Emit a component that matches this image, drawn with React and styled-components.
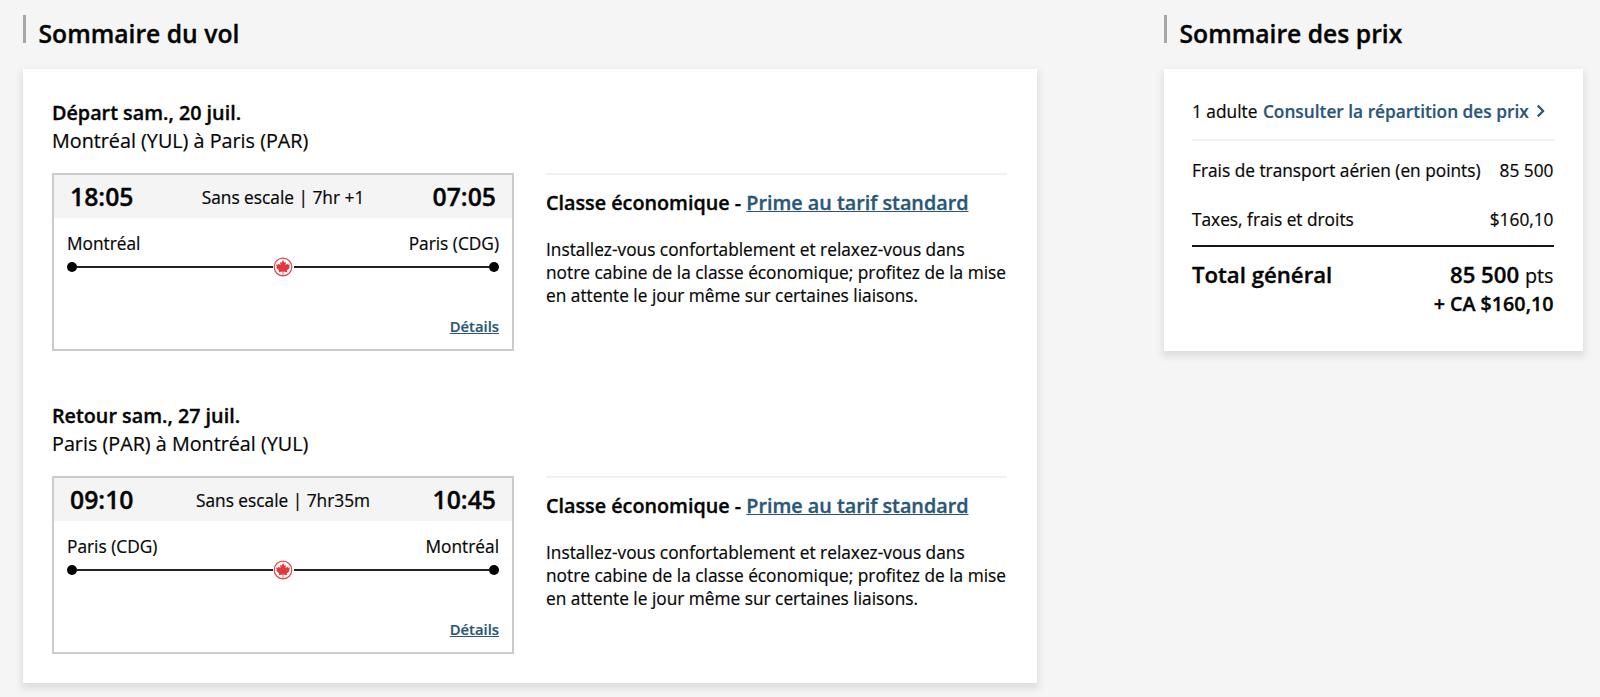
import React from 'react';
import styled, { createGlobalStyle } from 'styled-components';

const GlobalStyle = createGlobalStyle`
  * {
    box-sizing: border-box;
  }
  body {
    margin: 0;
    background-color: #f5f5f5;
    color: #050505;
    font-family: 'Open Sans', 'Noto Sans', sans-serif;
    -webkit-text-stroke: 0.2px;
  }
  h2, h3, p {
    margin: 0;
  }
`;

const Page = styled.div`
  width: 1600px;
  height: 697px;
  padding: 15px 17px 0 23px;
  display: flex;
  justify-content: space-between;
  align-items: flex-start;
  overflow: hidden;
`;
const Column = styled.section`
  width: ${(props) => props.$width}px;
`;
const Heading = styled.div`
  height: 54px;
  display: flex;
  align-items: flex-start;
  gap: 12.5px;
`;
const Bar = styled.span`
  width: 3px;
  height: 28px;
  background-color: #a5a8ab;
`;
const Title = styled.h2`
  padding-top: 2px;
  font-size: 24.7px;
  font-weight: 600;
  line-height: 34px;
  white-space: nowrap;
  -webkit-text-stroke: 0.35px;
`;
const Card = styled.div`
  height: ${(props) => props.$height}px;
  padding: ${(props) => props.$padding};
  background-color: white;
  box-shadow: 0 4px 7px 2px rgba(0, 0, 0, 0.09);
`;

const Flight = styled.article`
  height: 303px;
`;
const Route = styled.h3`
  height: 74px;
  font-size: 19.75px;
  font-weight: 400;
  line-height: 28px;
`;
const Strong = styled.strong`
  display: block;
  font-weight: 600;
  -webkit-text-stroke: 0.35px;
`;
const Row = styled.div`
  display: flex;
  gap: 32px;
`;
const Segment = styled.div`
  width: 462px;
  height: 178px;
  border: 2px solid #cbcbcb;
`;
const Times = styled.div`
  height: 43px;
  padding: 0 16px;
  display: flex;
  align-items: center;
  justify-content: space-between;
  background-color: #f4f4f4;
`;
const Time = styled.span`
  padding-bottom: 2px;
  font-size: 24.8px;
  font-weight: 600;
  line-height: 40px;
  -webkit-text-stroke: 0.35px;
`;
const Duration = styled.span`
  padding-top: 1px;
  font-size: 17.3px;
`;
const Track = styled.div`
  padding: 13px 13px 0;
`;
const Cities = styled.div`
  display: flex;
  justify-content: space-between;
  font-size: 17.3px;
  line-height: 25px;
`;
const Line = styled.div`
  height: 22px;
  display: flex;
  align-items: center;
`;
const Dot = styled.span`
  width: 10px;
  height: 10px;
  border-radius: 50%;
  background-color: #000;
`;
const Rule = styled.span`
  flex: 1;
  height: 2px;
  background-color: #222;
`;
const Leaf = styled.svg`
  width: 20px;
  height: 20px;
  margin: 0 1px 0 0;
`;
const Link = styled.a`
  color: #2a5678;
  font-weight: 600;
  text-decoration: ${(props) => (props.$plain ? 'none' : 'underline')};
  cursor: pointer;
`;
const Details = styled.div`
  padding-top: 38px;
  text-align: right;
  font-size: 14.8px;
  line-height: 20px;
`;
const Cabin = styled.div`
  width: 461px;
  border-top: 2px solid #f1f1f1;
`;
const CabinTitle = styled.p`
  padding-top: 14px;
  font-size: 19.75px;
  font-weight: 600;
  line-height: 28px;
  white-space: nowrap;
  -webkit-text-stroke: 0.35px;
`;
const CabinText = styled.p`
  padding-top: 21px;
  font-size: 17.3px;
  line-height: 23.2px;
  white-space: nowrap;
`;

const Travellers = styled.div`
  height: 42px;
  display: flex;
  align-items: flex-start;
  gap: 5.5px;
  border-bottom: 2px solid #f1f1f1;
  font-size: 17.3px;
  line-height: 25px;
  white-space: nowrap;
`;
const Chevron = styled.svg`
  width: 10px;
  height: 14px;
  margin: 5px 0 0 2px;
`;
const PriceRow = styled.div`
  height: ${(props) => props.$height}px;
  padding-top: ${(props) => props.$top || 0}px;
  display: flex;
  justify-content: space-between;
  font-size: 17.3px;
  line-height: 25px;
  white-space: nowrap;
`;
const Total = styled.div`
  padding-top: 13px;
  display: flex;
  justify-content: space-between;
  border-top: 2px solid #16161a;
  font-size: 22.2px;
  font-weight: 600;
  line-height: 29px;
  -webkit-text-stroke: 0.35px;
`;
const Amount = styled.div`
  text-align: right;
`;
const Unit = styled.span`
  font-size: 19.75px;
  font-weight: 400;
  -webkit-text-stroke: 0.2px;
`;
const Cash = styled.div`
  font-size: 19.7px;
  line-height: 27px;
`;

const flights = [
  {
    day: 'Départ sam., 20 juil.',
    route: 'Montréal (YUL) à Paris (PAR)',
    start: '18:05',
    end: '07:05',
    duration: 'Sans escale | 7hr +1',
    from: 'Montréal',
    to: 'Paris (CDG)',
  },
  {
    day: 'Retour sam., 27 juil.',
    route: 'Paris (PAR) à Montréal (YUL)',
    start: '09:10',
    end: '10:45',
    duration: 'Sans escale | 7hr35m',
    from: 'Paris (CDG)',
    to: 'Montréal',
  },
];

const SectionTitle = ({ children }) => (
  <Heading>
    <Bar />
    <Title>{children}</Title>
  </Heading>
);

const MapleLeaf = () => (
  <Leaf viewBox="0 0 20 20">
    <circle cx="10" cy="10" r="8.8" fill="none" stroke="#e0474c" strokeWidth="1.2" />
    <path
      d="M10 3L11.4 5.8L12.9 5.1L12.5 8.2L14.4 6.6L14.9 7.8L17 7.6L16.1 10L16.8 10.8L13.8 13.4L14.4 15.2L10.4 14.4V18.5H9.6V14.4L5.6 15.2L6.2 13.4L3.2 10.8L3.9 10L3 7.6L5.1 7.8L5.6 6.6L7.5 8.2L7.1 5.1L8.6 5.8Z"
      fill="#e0383e"
    />
  </Leaf>
);

const FlightCard = ({ flight }) => (
  <Flight>
    <Route>
      <Strong>{flight.day}</Strong>
      {flight.route}
    </Route>
    <Row>
      <Segment>
        <Times>
          <Time>{flight.start}</Time>
          <Duration>{flight.duration}</Duration>
          <Time>{flight.end}</Time>
        </Times>
        <Track>
          <Cities>
            <span>{flight.from}</span>
            <span>{flight.to}</span>
          </Cities>
          <Line>
            <Dot />
            <Rule />
            <MapleLeaf />
            <Rule />
            <Dot />
          </Line>
          <Details>
            <Link>Détails</Link>
          </Details>
        </Track>
      </Segment>
      <Cabin>
        <CabinTitle>
          Classe économique - <Link>Prime au tarif standard</Link>
        </CabinTitle>
        <CabinText>
          Installez-vous confortablement et relaxez-vous dans
          <br />
          notre cabine de la classe économique; profitez de la mise
          <br />
          en attente le jour même sur certaines liaisons.
        </CabinText>
      </Cabin>
    </Row>
  </Flight>
);

const App = () => {
  return (
    <>
      <GlobalStyle />
      <Page>
        <Column $width={1014}>
          <SectionTitle>Sommaire du vol</SectionTitle>
          <Card $height={614} $padding="30px 29px 0">
            {flights.map((flight) => (
              <FlightCard key={flight.day} flight={flight} />
            ))}
          </Card>
        </Column>
        <Column $width={419}>
          <SectionTitle>Sommaire des prix</SectionTitle>
          <Card $height={282} $padding="30px 29.5px 0 28px">
            <Travellers>
              <span>1 adulte</span>
              <Link $plain>Consulter la répartition des prix</Link>
              <Chevron viewBox="0 0 9 13">
                <path d="M1.5 1.5l5 5-5 5" fill="none" stroke="#2a5678" strokeWidth="2" />
              </Chevron>
            </Travellers>
            <PriceRow $height={66} $top={17}>
              <span>Frais de transport aérien (en points)</span>
              <span>85 500</span>
            </PriceRow>
            <PriceRow $height={38}>
              <span>Taxes, frais et droits</span>
              <span>$160,10</span>
            </PriceRow>
            <Total>
              <span>Total général</span>
              <Amount>
                85 500 <Unit>pts</Unit>
                <Cash>+ CA $160,10</Cash>
              </Amount>
            </Total>
          </Card>
        </Column>
      </Page>
    </>
  );
};

export default App;
